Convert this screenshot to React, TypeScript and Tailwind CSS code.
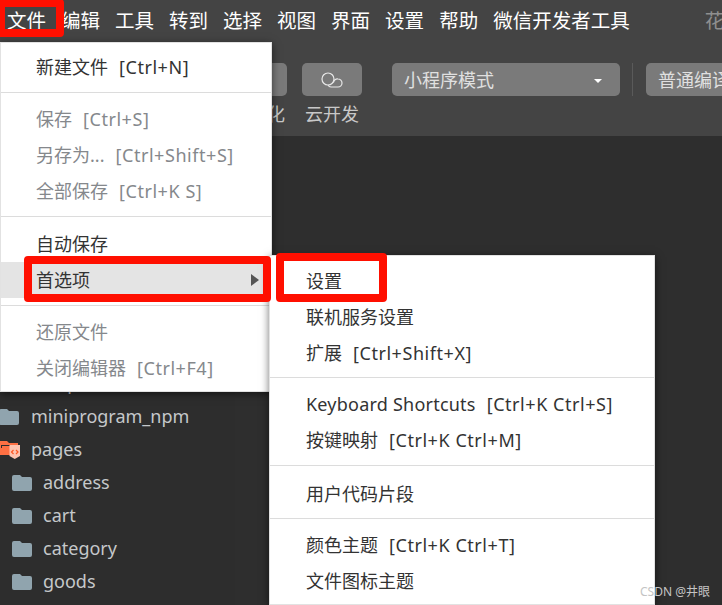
const FONT = "font-['Noto_Sans','Noto_Sans_CJK_SC',sans-serif]";

const topMenus = ["文件", "编辑", "工具", "转到", "选择", "视图", "界面", "设置", "帮助", "微信开发者工具"];

type Item =
  | { label: string; keys?: string; disabled?: boolean; active?: boolean; sub?: boolean; latin?: boolean }
  | { sep: string };

const fileMenu: Item[] = [
  { label: "新建文件", keys: "[Ctrl+N]" },
  { sep: "mt-[7px] mb-[8px]" },
  { label: "保存", keys: "[Ctrl+S]", disabled: true },
  { label: "另存为...", keys: "[Ctrl+Shift+S]", disabled: true },
  { label: "全部保存", keys: "[Ctrl+K S]", disabled: true },
  { sep: "mt-[7px] mb-[9px]" },
  { label: "自动保存" },
  { label: "首选项", active: true, sub: true },
  { sep: "mt-[7px] mb-[8px]" },
  { label: "还原文件", disabled: true },
  { label: "关闭编辑器", keys: "[Ctrl+F4]", disabled: true },
];

const prefMenu: Item[] = [
  { label: "设置" },
  { label: "联机服务设置" },
  { label: "扩展", keys: "[Ctrl+Shift+X]" },
  { sep: "mt-[6px] mb-[8px]" },
  { label: "Keyboard Shortcuts", keys: "[Ctrl+K Ctrl+S]", latin: true },
  { label: "按键映射", keys: "[Ctrl+K Ctrl+M]" },
  { sep: "mt-[7px] mb-[10px]" },
  { label: "用户代码片段" },
  { sep: "mt-[6px] mb-[8px]" },
  { label: "颜色主题", keys: "[Ctrl+K Ctrl+T]" },
  { label: "文件图标主题" },
];

function MenuRows({ items, pad }: { items: Item[]; pad: string }) {
  return (
    <>
      {items.map((item, i) =>
        "sep" in item ? (
          <div key={i} className={`h-px bg-[#dcdcdc] ${item.sep}`} />
        ) : (
          <div
            key={i}
            className={`flex h-9 items-center whitespace-pre text-[18px] ${pad} ${item.active ? "bg-[#e4e4e4]" : ""} ${
              item.disabled ? "text-[#85888c]" : "text-[#333333]"
            }`}
          >
            <span className={item.latin ? "tracking-[0.22px]" : ""}>{item.label}</span>
            {item.keys && <span className="ml-[11px] tracking-[0.55px]">{item.keys}</span>}
            {item.sub && (
              <span className="ml-auto mr-3 h-0 w-0 border-y-[6px] border-l-[8px] border-y-transparent border-l-[#555555]" />
            )}
          </div>
        ),
      )}
    </>
  );
}

function Folder() {
  return (
    <svg viewBox="0 0 20 16" className="h-4 w-5 shrink-0">
      <path d="M2 0h6l2 2h8a2 2 0 0 1 2 2v10a2 2 0 0 1-2 2H2a2 2 0 0 1-2-2V2a2 2 0 0 1 2-2z" fill="#90a4ae" />
    </svg>
  );
}

function PagesFolder() {
  return (
    <svg viewBox="0 0 22 20" className="h-5 w-[22px] shrink-0">
      <path d="M1 1h7l2 2h9v3H1z" fill="#ff7043" />
      <path d="M0 3h2v12H0z" fill="#ff7043" />
      <path d="M2 5h15v1H3v2H2z" fill="#2d2d2d" />
      <path d="M2 8h1V6h15v9H2z" fill="#ff7043" />
      <path d="M10.500 5h10.500v11l-5.250 3-5.250-3z" fill="#ffc4b0" />
      <path d="M14.500 10l-2 2 2 2M17 10l2 2-2 2" fill="none" stroke="#ff5722" strokeWidth="1.200" />
    </svg>
  );
}

function TreeRow({ name, depth, open }: { name: string; depth: number; open?: boolean }) {
  return (
    <div className={`flex h-[33px] items-center text-[18px] text-[#c5c8ca] ${depth ? "pl-3" : "-ml-px"}`}>
      {open ? <PagesFolder /> : <Folder />}
      <span className={open ? "ml-[10px]" : depth ? "ml-[11px]" : "ml-3"}>{name}</span>
    </div>
  );
}

export default function App() {
  return (
    <div className={`relative flex h-[605px] w-[722px] flex-col overflow-hidden bg-[#2e2e2e] ${FONT}`}>
      <header className="h-[136px] shrink-0 bg-[#444444]">
        <nav className="flex h-[42px] items-center gap-[15px] whitespace-nowrap pl-[7px] text-[19.500px] text-white">
          {topMenus.map((m) => (
            <span key={m} className="shrink-0">
              {m}
            </span>
          ))}
          <span className="ml-[60px] shrink-0 text-[#8f8f8f]">花</span>
        </nav>

        <div className="mt-[21px] flex h-[33px] items-stretch">
          <div className="ml-[250px] w-[37px] shrink-0 rounded-[5px] bg-[#7a7a7a]" />
          <div className="ml-[15px] flex w-[60px] shrink-0 items-center justify-center rounded-[5px] bg-[#7a7a7a]">
            <svg viewBox="0 0 22 16" className="h-4 w-[22px]" fill="none" stroke="#e8e8e8" strokeWidth="1.200">
              <circle cx="7" cy="7" r="6" />
              <path d="M7 13c1 2 2 2 3 2h7a4 4 0 0 0 0-8 4 4 0 0 0-4.500 3.500" />
            </svg>
          </div>
          <div className="ml-[30px] flex w-[228px] shrink-0 items-center rounded-[5px] bg-[#7a7a7a] pl-3 pr-[18px] pt-[2px] text-[18px] text-[#e0e0e0]">
            小程序模式
            <span className="ml-auto h-0 w-0 border-x-[4px] border-t-[4px] border-x-transparent border-t-white" />
          </div>
          <div className="ml-3 w-px shrink-0 bg-[#5a5a5a]" />
          <div className="ml-[13px] flex w-[90px] shrink-0 items-center whitespace-nowrap rounded-l-[5px] bg-[#7a7a7a] pl-3 pt-[2px] text-[18px] text-[#e0e0e0]">
            普通编译
          </div>
        </div>

        <div className="mt-[5px] flex h-[27px] items-center text-[18px] text-[#c8c8c8]">
          <span className="ml-[267px]">化</span>
          <span className="ml-[20px]">云开发</span>
        </div>
      </header>

      <div className="flex min-h-0 flex-1">
        <aside className="h-full w-[235px] shrink-0 bg-[#2d2d2d] pt-[231px]">
          <TreeRow name="components" depth={0} />
          <TreeRow name="miniprogram_npm" depth={0} />
          <TreeRow name="pages" depth={0} open />
          <TreeRow name="address" depth={1} />
          <TreeRow name="cart" depth={1} />
          <TreeRow name="category" depth={1} />
          <TreeRow name="goods" depth={1} />
        </aside>
        <main className="flex-1 bg-[#2e2e2e]" />
      </div>

      {/* file menu */}
      <div className="absolute left-0 top-[42px] w-[272px] border border-[#e2e2e2] bg-white pb-[5px] pt-[6px] shadow-[0_2px_8px_rgba(0,0,0,0.55)]">
        <MenuRows items={fileMenu} pad="pl-[35px]" />
      </div>

      {/* preferences submenu */}
      <div className="absolute left-[269px] top-[255px] w-[386px] border border-[#e2e2e2] bg-white pb-[5px] pt-[7px] shadow-[0_2px_8px_rgba(0,0,0,0.55)]">
        <MenuRows items={prefMenu} pad="pl-9" />
      </div>

      {/* red annotation boxes */}
      <div className="absolute -left-[3px] -top-px h-[38px] w-[67px] rounded border-8 border-[#ff0f00]" />
      <div className="absolute left-6 top-[256px] h-[46px] w-[247px] rounded border-8 border-[#ff0f00]" />
      <div className="absolute left-[276px] top-[253px] h-[49px] w-[111px] rounded border-8 border-[#ff0f00]" />

      <div className="absolute left-[640px] top-[583px] text-[12px] text-[#c4c4c4]">CSDN @井眼</div>
    </div>
  );
}
